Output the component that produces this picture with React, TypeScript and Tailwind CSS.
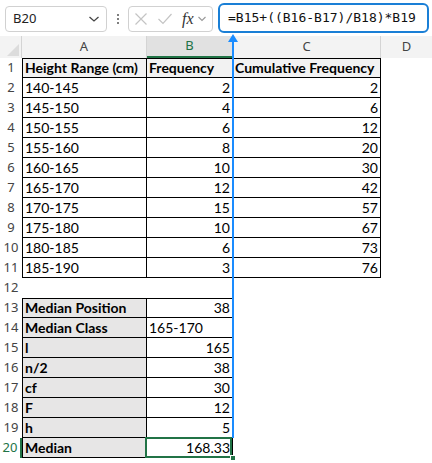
import React from "react";

type Row = {
  n: number;
  a?: string;
  b?: string;
  c?: string;
  bLeft?: boolean;
};

const data: Row[] = [
  { n: 2, a: "140-145", b: "2", c: "2" },
  { n: 3, a: "145-150", b: "4", c: "6" },
  { n: 4, a: "150-155", b: "6", c: "12" },
  { n: 5, a: "155-160", b: "8", c: "20" },
  { n: 6, a: "160-165", b: "10", c: "30" },
  { n: 7, a: "165-170", b: "12", c: "42" },
  { n: 8, a: "170-175", b: "15", c: "57" },
  { n: 9, a: "175-180", b: "10", c: "67" },
  { n: 10, a: "180-185", b: "6", c: "73" },
  { n: 11, a: "185-190", b: "3", c: "76" },
];

const lower: Row[] = [
  { n: 13, a: "Median Position", b: "38" },
  { n: 14, a: "Median Class", b: "165-170", bLeft: true },
  { n: 15, a: "l", b: "165" },
  { n: 16, a: "n/2", b: "38" },
  { n: 17, a: "cf", b: "30" },
  { n: 18, a: "F", b: "12" },
  { n: 19, a: "h", b: "5" },
];

const cellFont = { fontFamily: "Lato, 'Open Sans', sans-serif" };
const uiFont = { fontFamily: "'Noto Sans', 'Open Sans', sans-serif" };

function RowHead({ n, selected }: { n: number; selected?: boolean }) {
  return (
    <div
      className={`w-[22px] h-[20px] flex items-center justify-center text-[13px] shrink-0 ${
        selected ? "text-[#217346] border-r-2 border-[#217346]" : "text-[#444]"
      }`}
      style={uiFont}
    >
      {n}
    </div>
  );
}

export default function App() {
  return (
    <div className="relative w-[432px] h-[463px] bg-white overflow-hidden text-black">
      {/* Top bar */}
      <div className="h-[36px] flex items-start pt-[6px] pl-[5px]">
        <div
          className="w-[102px] h-[26px] border border-[#d1d1d1] rounded-[4px] flex items-center justify-between pl-[7px] pr-[6px]"
          style={uiFont}
        >
          <span className="text-[13px] text-[#222]">B20</span>
          <svg width="12" height="8" viewBox="0 0 12 8">
            <path d="M1.5 2 L6 6 L10.5 2" fill="none" stroke="#444" strokeWidth="1.3" />
          </svg>
        </div>
        <div className="w-[21px] h-[26px] flex flex-col items-center justify-center gap-[2px]">
          <span className="w-[2px] h-[2px] bg-[#555] rounded-full" />
          <span className="w-[2px] h-[2px] bg-[#555] rounded-full" />
          <span className="w-[2px] h-[2px] bg-[#555] rounded-full" />
        </div>
        <div className="w-[85px] h-[26px] border border-[#d1d1d1] rounded-[4px] flex items-center pl-[5px]">
          <svg width="14" height="14" viewBox="0 0 14 14">
            <path d="M1.5 1.5 L12.5 12.5 M12.5 1.5 L1.5 12.5" stroke="#c4c4c4" strokeWidth="1.2" />
          </svg>
          <svg width="16" height="14" viewBox="0 0 16 14" className="ml-[9px]">
            <path d="M1.5 7 L6 11.5 L14.5 2" fill="none" stroke="#c4c4c4" strokeWidth="1.2" />
          </svg>
          <span
            className="ml-[9px] text-[16px] italic text-[#333] leading-none"
            style={{ fontFamily: "'Liberation Serif', 'DejaVu Serif', serif" }}
          >
            fx
          </span>
          <svg width="10" height="8" viewBox="0 0 10 8" className="ml-[3px]">
            <path d="M1.5 2 L5 5.5 L8.5 2" fill="none" stroke="#999" strokeWidth="1.1" />
          </svg>
        </div>
        <div className="ml-[5px] mt-[-3px] w-[211px] h-[30px] border-2 border-[#1a7fd6] rounded-[6px] flex items-center pl-[8px]">
          <span
            className="text-[13px] text-[#111]"
            style={{ fontFamily: "'DejaVu Sans Mono', 'Liberation Mono', monospace" }}
          >
            =B15+((B16-B17)/B18)*B19
          </span>
        </div>
      </div>

      {/* Column headers */}
      <div className="flex h-[22px] bg-[#f3f3f3] text-[13px] text-[#444]" style={uiFont}>
        <div className="w-[22px] h-full relative border-r border-[#d4d4d4]">
          <svg width="12" height="12" viewBox="0 0 12 12" className="absolute right-[2px] bottom-[2px]">
            <path d="M12 0 L12 12 L0 12 Z" fill="#dcdcdc" />
          </svg>
        </div>
        <div className="w-[125px] h-full flex items-center justify-center border-r border-[#d4d4d4]">A</div>
        <div className="w-[86px] h-full flex items-center justify-center bg-[#e1e1e1] border-b-2 border-[#217346] text-[#217346] border-r border-r-[#d4d4d4]">
          B
        </div>
        <div className="w-[148px] h-full flex items-center justify-center border-r border-[#d4d4d4]">C</div>
        <div className="flex-1 h-full flex items-center justify-center">D</div>
      </div>

      {/* Grid */}
      <div className="text-[14px]" style={cellFont}>
        {/* Row 1 */}
        <div className="flex h-[20px]">
          <RowHead n={1} />
          <div className="w-[125px] h-[20px] bg-[#f2f2f2] border border-black flex items-end pl-[2px] font-bold leading-[19px] whitespace-nowrap">
            Height Range (cm)
          </div>
          <div className="w-[86px] h-[20px] bg-[#f2f2f2] border-y border-r border-black flex items-end pl-[2px] font-bold leading-[19px]">
            Frequency
          </div>
          <div className="w-[148px] h-[20px] bg-[#f2f2f2] border-y border-r border-black flex items-end pl-[2px] font-bold leading-[19px] whitespace-nowrap">
            Cumulative Frequency
          </div>
        </div>
        {data.map((r) => (
          <div key={r.n} className="flex h-[20px]">
            <RowHead n={r.n} />
            <div className="w-[125px] h-[20px] border-x border-b border-black flex items-end pl-[2px] leading-[19px]">
              {r.a}
            </div>
            <div className="w-[86px] h-[20px] border-r border-b border-black flex items-end justify-end pr-[2px] leading-[19px]">
              {r.b}
            </div>
            <div className="w-[148px] h-[20px] border-r border-b border-black flex items-end justify-end pr-[2px] leading-[19px]">
              {r.c}
            </div>
          </div>
        ))}
        {/* Row 12 */}
        <div className="flex h-[20px]">
          <RowHead n={12} />
        </div>
        {lower.map((r) => (
          <div key={r.n} className="flex h-[20px]">
            <RowHead n={r.n} />
            <div
              className={`w-[125px] h-[20px] bg-[#e7e6e6] border-x border-b border-black flex items-end pl-[2px] font-bold leading-[19px] ${
                r.n === 13 ? "border-t" : ""
              }`}
            >
              {r.a}
            </div>
            <div
              className={`w-[86px] h-[20px] border-r border-b border-black flex items-end pr-[2px] leading-[19px] ${
                r.bLeft ? "justify-start pl-[2px]" : "justify-end"
              } ${r.n === 13 ? "border-t" : ""}`}
            >
              {r.b}
            </div>
          </div>
        ))}
        {/* Row 20 */}
        <div className="flex h-[20px]">
          <RowHead n={20} selected />
          <div className="w-[125px] h-[20px] bg-[#e7e6e6] border-x border-b border-black flex items-end pl-[2px] font-bold leading-[19px]">
            Median
          </div>
          <div className="relative w-[86px] h-[20px] border-r border-b border-black flex items-end justify-end pr-[2px] leading-[19px]">
            168.33
            <div className="absolute left-[-2px] top-[-1px] w-[87px] h-[21px] border-2 border-[#217346]" />
            <div className="absolute right-[-4px] bottom-[-4px] w-[6px] h-[6px] bg-[#217346] border border-white" />
          </div>
        </div>
      </div>

      {/* Blue arrow overlay */}
      <svg
        className="absolute left-0 top-0 pointer-events-none"
        width="432"
        height="463"
        viewBox="0 0 432 463"
      >
        <line x1="233" y1="38" x2="233" y2="438" stroke="#1a8cff" strokeWidth="2" />
        <path d="M233 34 L238 42 L228 42 Z" fill="#1a8cff" />
      </svg>
    </div>
  );
}
